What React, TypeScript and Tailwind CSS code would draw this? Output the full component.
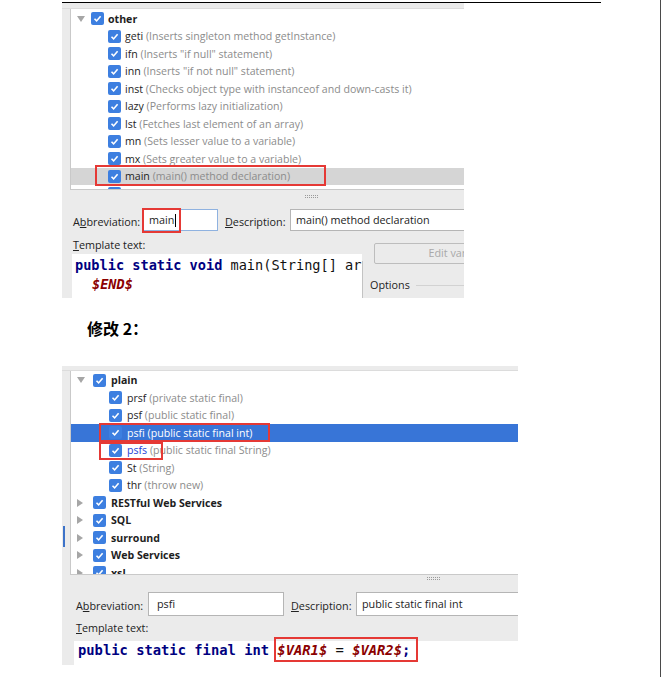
const UI = { fontFamily: '"Open Sans", "Noto Sans", "Liberation Sans", sans-serif' };
const MONO = { fontFamily: '"DejaVu Sans Mono", "Liberation Mono", monospace' };

type Item = {
  name: string;
  desc?: string;
  group?: boolean;
  open?: boolean;
  state?: "sel" | "hover";
  match?: boolean;
};

function Arrow({ open }: { open?: boolean }) {
  return open ? (
    <svg width="8" height="6" viewBox="0 0 8 6">
      <polygon points="0,0 8,0 4,6" fill="#a6a6a6" />
    </svg>
  ) : (
    <svg width="6" height="8" viewBox="0 0 6 8">
      <polygon points="0,0 6,4 0,8" fill="#a6a6a6" />
    </svg>
  );
}

function Check() {
  return (
    <span className="inline-flex h-[13px] w-[13px] shrink-0 items-center justify-center rounded-[2px] bg-[#3d7fe0]">
      <svg width="9" height="9" viewBox="0 0 9 9">
        <path d="M1.5 4.8 L3.6 6.9 L7.6 2.2" fill="none" stroke="#fff" strokeWidth="1.6" />
      </svg>
    </span>
  );
}

function Tree({ items, g, c, gap }: { items: Item[]; g: number; c: number; gap: number }) {
  return (
    <div>
      {items.map((it, i) => (
        <div
          key={i}
          className={
            "flex h-[17.5px] items-center whitespace-nowrap text-[10.6px] " +
            (it.state === "sel" ? "bg-[#3875d7]" : it.state === "hover" ? "bg-[#d5d5d5]" : "")
          }
        >
          <div className="flex shrink-0 items-center pl-[6px]" style={{ width: it.group ? g : c }}>
            {it.group && <Arrow open={it.open} />}
          </div>
          <Check />
          <span className="relative top-[1px]" style={{ marginLeft: gap }}>
            <span
              className={
                (it.group ? "font-bold " : "") +
                (it.state === "sel" ? "text-white" : it.match ? "text-[#2442d6]" : "text-[#1e1e1e]")
              }
            >
              {it.name}
            </span>
            {it.desc && (
              <span className={it.state === "sel" ? "text-white" : "text-[#8c8c8c]"}> ({it.desc})</span>
            )}
          </span>
        </div>
      ))}
    </div>
  );
}

function Label({ text, u }: { text: string; u: number }) {
  return (
    <span className="whitespace-nowrap text-[10.8px] text-[#222]">
      {text.slice(0, u)}
      <span className="underline">{text[u]}</span>
      {text.slice(u + 1)}
    </span>
  );
}

function Dots() {
  return (
    <div className="flex flex-col gap-[1px]">
      <div className="w-[13px] border-t border-dotted border-[#9a9a9a]" />
      <div className="w-[13px] border-t border-dotted border-[#9a9a9a]" />
    </div>
  );
}

const topItems: Item[] = [
  { name: "other", group: true, open: true },
  { name: "geti", desc: "Inserts singleton method getInstance" },
  { name: "ifn", desc: 'Inserts "if null" statement' },
  { name: "inn", desc: 'Inserts "if not null" statement' },
  { name: "inst", desc: "Checks object type with instanceof and down-casts it" },
  { name: "lazy", desc: "Performs lazy initialization" },
  { name: "lst", desc: "Fetches last element of an array" },
  { name: "mn", desc: "Sets lesser value to a variable" },
  { name: "mx", desc: "Sets greater value to a variable" },
  { name: "main", desc: "main() method declaration", state: "hover" },
  { name: "toar", desc: "Stores elements of java.util.Collection into array" },
];

const bottomItems: Item[] = [
  { name: "plain", group: true, open: true },
  { name: "prsf", desc: "private static final" },
  { name: "psf", desc: "public static final" },
  { name: "psfi", desc: "public static final int", state: "sel" },
  { name: "psfs", desc: "public static final String", match: true },
  { name: "St", desc: "String" },
  { name: "thr", desc: "throw new" },
  { name: "RESTful Web Services", group: true },
  { name: "SQL", group: true },
  { name: "surround", group: true },
  { name: "Web Services", group: true },
  { name: "xsl", group: true },
];

function TopShot() {
  return (
    <div className="ml-[62px] h-[295px] w-[402px] overflow-hidden bg-[#ebebeb]" style={UI}>
      <div className="h-[6px] border-b border-[#dcdcdc]" />
      <div className="ml-[8px] h-[181px] overflow-hidden border-b border-l border-[#c9c9c9] bg-white pt-[1px]">
        <Tree items={topItems} g={20} c={37} gap={4} />
      </div>
      <div className="flex h-[19px] items-start pl-[243px] pt-[5px]">
        <Dots />
      </div>
      <div className="flex h-[22px] items-center">
        <div className="ml-[11px] w-[70px]">
          <Label text="Abbreviation:" u={1} />
        </div>
        <div className="flex h-[22px] w-[75px] items-center border border-[#8fb2e0] bg-white pl-[5px] text-[10.8px] text-[#222]">
          main<span className="ml-[1px] h-[13px] w-px bg-black" />
        </div>
        <div className="ml-[7px] w-[65px]">
          <Label text="Description:" u={0} />
        </div>
        <div className="flex h-[22px] flex-1 items-center border border-r-0 border-[#b5b5b5] bg-white pl-[5px] text-[10.8px] text-[#222]">
          main() method declaration
        </div>
      </div>
      <div className="mt-[6px] flex">
        <div className="w-[300px] shrink-0">
          <div className="flex h-[16px] items-center pl-[11px]">
            <Label text="Template text:" u={0} />
          </div>
          <div
            className="ml-[10px] mt-[1px] h-[60px] overflow-hidden whitespace-nowrap bg-white pl-[3px] pt-[2px] text-[13.6px] leading-[19px]"
            style={MONO}
          >
            <div>
              <span className="font-bold text-[#000080]">public static void </span>
              <span className="text-[#111]">main(String[] ar</span>
            </div>
            <div className="pl-[17px] font-bold italic text-[#8b0000]">$END$</div>
          </div>
        </div>
        <div className="mt-[24px] w-px shrink-0 self-stretch bg-[#c3c3c3]" />
        <div className="min-w-0 flex-1">
          <div className="ml-[11px] mt-[6px] flex h-[21px] w-[176px] items-center justify-center whitespace-nowrap rounded-[2px] border border-[#bdbdbd] text-[10.8px] text-[#a9a9a9]">
            Edit variables
          </div>
          <div className="mt-[13px] flex items-center pl-[7px]">
            <span className="text-[10.8px] text-[#222]">Options</span>
            <div className="ml-[6px] h-px flex-1 bg-[#d2d2d2]" />
          </div>
        </div>
      </div>
    </div>
  );
}

function BottomShot() {
  return (
    <div className="relative ml-[62px] h-[299px] w-[456px] overflow-hidden bg-[#ebebeb]" style={UI}>
      <div className="h-[5px] border-b border-[#dcdcdc]" />
      <div className="flex">
        <div className="w-[8px] pt-[155px]">
          <div className="ml-[1px] h-[21px] w-[2px] bg-[#3d73c9]" />
        </div>
        <div className="h-[204px] flex-1 overflow-hidden border-b border-l border-[#c9c9c9] bg-white pt-[0.5px]">
          <Tree items={bottomItems} g={22} c={38} gap={5} />
        </div>
      </div>
      <div className="flex h-[17px] items-start pl-[365px] pt-[2px]">
        <Dots />
      </div>
      <div className="flex h-[24px] items-center">
        <div className="ml-[14px] w-[72px]">
          <Label text="Abbreviation:" u={1} />
        </div>
        <div className="flex h-[24px] w-[136px] items-center border border-[#b5b5b5] bg-white pl-[8px] text-[10.8px] text-[#222]">
          psfi
        </div>
        <div className="ml-[7px] w-[65px]">
          <Label text="Description:" u={0} />
        </div>
        <div className="flex h-[24px] flex-1 items-center border border-r-0 border-[#b5b5b5] bg-white pl-[5px] text-[10.8px] text-[#222]">
          public static final int
        </div>
      </div>
      <div className="mt-[4px] flex h-[16px] items-center pl-[14px]">
        <Label text="Template text:" u={0} />
      </div>
      <div
        className="ml-[12px] mt-[5px] h-[40px] whitespace-nowrap bg-white pl-[4px] text-[13.8px] leading-[18px]"
        style={MONO}
      >
        <span className="font-bold text-[#000080]">public static final int </span>
        <span className="font-bold italic text-[#8b0000]">$VAR1$</span>
        <span className="text-[#111]"> = </span>
        <span className="font-bold italic text-[#8b0000]">$VAR2$</span>
        <span className="font-bold text-[#000080]">;</span>
      </div>
    </div>
  );
}

export default function App() {
  return (
    <div className="relative h-[677px] w-[661px] overflow-hidden border-r border-[#4a4a4a] bg-white">
      <div className="ml-[62px] mt-[2px] h-px w-[539px] bg-black" />
      <TopShot />
      <div className="h-[68px] pl-[87px] pt-[18px]">
        <span
          className="text-[16px] font-bold text-black"
          style={{ fontFamily: '"Noto Sans CJK SC", "Liberation Sans", sans-serif' }}
        >
          修改 2：
        </span>
      </div>
      <BottomShot />

      {/* red annotation boxes */}
      <div className="absolute left-[95px] top-[165px] h-[21px] w-[231px] border-2 border-[#e53935]" />
      <div className="absolute left-[142px] top-[208px] h-[25px] w-[39px] border-2 border-[#e53935]" />
      <div className="absolute left-[99px] top-[423px] h-[19px] w-[171px] border-2 border-[#e53935]" />
      <div className="absolute left-[99px] top-[442px] h-[18px] w-[64px] border-2 border-[#e53935]" />
      <div className="absolute left-[274px] top-[637px] h-[25px] w-[144px] border-2 border-[#e53935]" />
    </div>
  );
}
